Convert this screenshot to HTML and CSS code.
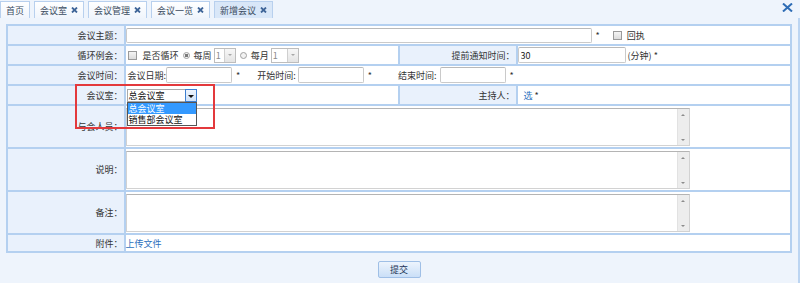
FILE: index.html
```html
<!DOCTYPE html>
<html lang="zh-CN">
<head>
  <meta charset="UTF-8">
  <title>新增会议</title>
  <link rel="stylesheet" href="styles.css">
</head>
<body>

  <div class="tabbar">
    <div class="tabs">
      <span class="tab">首页</span>
      <span class="tab">会议室<svg class="tab-x" width="7" height="6" viewBox="0 0 7 6"><path d="M1 0.5L6 5.5M6 0.5L1 5.5"/></svg></span>
      <span class="tab">会议管理<svg class="tab-x" width="7" height="6" viewBox="0 0 7 6"><path d="M1 0.5L6 5.5M6 0.5L1 5.5"/></svg></span>
      <span class="tab">会议一览<svg class="tab-x" width="7" height="6" viewBox="0 0 7 6"><path d="M1 0.5L6 5.5M6 0.5L1 5.5"/></svg></span>
      <span class="tab active">新增会议<svg class="tab-x" width="7" height="6" viewBox="0 0 7 6"><path d="M1 0.5L6 5.5M6 0.5L1 5.5"/></svg></span>
    </div>
    <svg class="close-all" width="11" height="9" viewBox="0 0 11 9"><path d="M1 0.5L10 8.5M10 0.5L1 8.5"/></svg>
  </div>

  <div class="panel">
    <table class="form">
      <colgroup>
        <col class="c-label"><col class="c-val"><col class="c-label"><col class="c-val">
      </colgroup>
      <tr>
        <th>会议主题：</th>
        <td colspan="3">
          <div class="line">
            <input class="txt w-subject" type="text">
            <span class="req">*</span>
            <span class="check ml-receipt"></span>
            <span class="ml5">回执</span>
          </div>
        </td>
      </tr>
      <tr>
        <th>循环例会：</th>
        <td>
          <div class="line">
            <span class="check ml2"></span>
            <span class="ml6">是否循环</span>
            <span class="radio on ml4"></span>
            <span class="ml4">每周</span>
            <span class="mini-select ml2"><b>1</b><i></i></span>
            <span class="radio ml4"></span>
            <span class="ml4">每月</span>
            <span class="mini-select wide ml2"><b>1</b><i></i></span>
          </div>
        </td>
        <th>提前通知时间：</th>
        <td>
          <div class="line">
            <input class="txt w-notice" type="text" value="30">
            <span class="ml2">(分钟) *</span>
          </div>
        </td>
      </tr>
      <tr>
        <th>会议时间：</th>
        <td colspan="3">
          <div class="line">
            <span class="ml2">会议日期:</span>
            <input class="txt w-time" type="text">
            <span class="req">*</span>
            <span class="gap-a">开始时间:</span>
            <input class="txt w-time ml2" type="text">
            <span class="req">*</span>
            <span class="gap-b">结束时间:</span>
            <input class="txt w-time ml3" type="text">
            <span class="req">*</span>
          </div>
        </td>
      </tr>
      <tr>
        <th>会议室：</th>
        <td>
          <div class="line">
            <div class="room-select">
              <span class="room-value">总会议室</span>
              <span class="room-btn"></span>
              <ul class="room-list">
                <li class="selected">总会议室</li>
                <li>销售部会议室</li>
              </ul>
            </div>
          </div>
        </td>
        <th>主持人：</th>
        <td>
          <div class="line">
            <a class="link ml6">选</a>
            <span class="ml2">*</span>
          </div>
        </td>
      </tr>
      <tr class="tall">
        <th>与会人员：</th>
        <td colspan="3">
          <div class="area"><textarea></textarea><span class="sbar"><i class="up"></i><i class="down"></i></span></div>
        </td>
      </tr>
      <tr class="tall">
        <th>说明：</th>
        <td colspan="3">
          <div class="area"><textarea></textarea><span class="sbar"><i class="up"></i><i class="down"></i></span></div>
        </td>
      </tr>
      <tr class="tall">
        <th>备注：</th>
        <td colspan="3">
          <div class="area"><textarea></textarea><span class="sbar"><i class="up"></i><i class="down"></i></span></div>
        </td>
      </tr>
      <tr class="short">
        <th>附件：</th>
        <td colspan="3"><a class="link">上传文件</a></td>
      </tr>
    </table>

    <div class="actions">
      <button type="button">提交</button>
    </div>

    <div class="mark"></div>
  </div>

</body>
</html>
```

FILE: styles.css
```css
body {
  margin: 0;
  background-color: #eef4fc;
  font-family: "Noto Sans CJK SC", "Noto Sans", sans-serif;
  font-size: 9px;
  color: #333;
}

/* tabs */
.tabbar {
  height: 18px;
  display: flex;
  justify-content: space-between;
  align-items: flex-start;
}

.tabs {
  display: flex;
  gap: 4px;
  padding-top: 1px;
}

.tab {
  height: 16px;
  padding: 0 5px;
  border: 1px solid #b8d0ee;
  border-bottom: none;
  background: linear-gradient(#ffffff, #f0f5fc);
  display: flex;
  align-items: center;
  gap: 4px;
  color: #3a4b60;
}

.tab.active {
  background: #d9e7f8;
}

.tab-x path {
  stroke: #3f6598;
  stroke-width: 1.8;
}

.close-all {
  margin: 3px 7px 0 0;
}

.close-all path {
  stroke: #2f6db5;
  stroke-width: 2;
}

/* form */
.panel {
  position: relative;
  padding: 6px;
  border-right: 2px solid #bcd5f2;
}

.form {
  width: 100%;
  border-collapse: collapse;
  table-layout: fixed;
  background-color: #fff;
}

.c-label { width: 15%; }
.c-val { width: 35%; }

.form th,
.form td {
  border: 2px solid #b4d0f0;
  height: 18px;
  padding: 0;
}

.form th {
  background-color: #e9f1fc;
  font-weight: normal;
  text-align: right;
  color: #333;
  padding-right: 1px;
}

.form tr.tall th,
.form tr.tall td {
  height: 41px;
}

.form tr.short th,
.form tr.short td {
  height: 16px;
}

.line {
  display: flex;
  align-items: center;
  white-space: nowrap;
}

.txt {
  box-sizing: border-box;
  height: 15px;
  border: 1px solid #cacaca;
  border-top-color: #b9b9b9;
  border-radius: 2px;
  padding: 0 2px;
  font: inherit;
  color: #222;
  outline: none;
}

.w-subject { width: 466px; }
.w-notice { width: 108px; height: 16px; }
.w-time { width: 66px; height: 16px; }

.req { margin-left: 4px; }
.ml2 { margin-left: 2px; }
.ml3 { margin-left: 3px; }
.ml4 { margin-left: 4px; }
.ml5 { margin-left: 5px; }
.ml6 { margin-left: 6px; }
.ml-receipt { margin-left: 13px; }
.gap-a { margin-left: 17px; }
.gap-b { margin-left: 26px; }

.check {
  width: 7px;
  height: 7px;
  border: 1px solid #9a9a9a;
  background: linear-gradient(#f4f4f4, #dcdcdc);
}

.radio {
  box-sizing: border-box;
  width: 7px;
  height: 7px;
  border: 1px solid #a0a0a0;
  border-radius: 50%;
  background-color: #f2f2f2;
}

.radio.on {
  background: radial-gradient(circle, #7a7a7a 0 1.5px, #f2f2f2 2px);
}

.mini-select {
  display: flex;
  height: 13px;
  border: 1px solid #bdbdbd;
  background-color: #fff;
}

.mini-select b {
  width: 8px;
  font-weight: normal;
  color: #8a8a8a;
  padding-left: 1px;
  line-height: 13px;
}

.mini-select.wide b { width: 14px; }

.mini-select i {
  width: 10px;
  border-left: 1px solid #cfcfcf;
  background: linear-gradient(#f7f7f7, #e4e4e4);
  position: relative;
}

.mini-select i::after {
  content: "";
  position: absolute;
  left: 3px;
  top: 5px;
  border-left: 2px solid transparent;
  border-right: 2px solid transparent;
  border-top: 2px solid #a8a8a8;
}

/* room select, opened */
.room-select {
  position: relative;
  display: flex;
  width: 70px;
  height: 13px;
  margin-left: 1px;
  border: 1px solid #a9a9a9;
  box-sizing: border-box;
  background-color: #fff;
}

.room-value {
  flex: 1;
  padding-left: 1px;
  line-height: 11px;
  color: #111;
}

.room-btn {
  width: 10px;
  border: 1px solid #3d7fd1;
  margin: -1px -1px -1px 0;
  background: linear-gradient(#eef5fe, #cfe2f8);
  position: relative;
}

.room-btn::after {
  content: "";
  position: absolute;
  left: 2px;
  top: 5px;
  border-left: 3px solid transparent;
  border-right: 3px solid transparent;
  border-top: 3px solid #111;
}

.room-list {
  position: absolute;
  left: -1px;
  top: 12px;
  width: 70px;
  box-sizing: border-box;
  margin: 0;
  padding: 0;
  list-style: none;
  border: 1px solid #555;
  background-color: #fff;
  z-index: 2;
}

.room-list li {
  height: 11px;
  line-height: 11px;
  padding-left: 1px;
  color: #111;
}

.room-list li.selected {
  background-color: #3399ff;
  color: #fff;
}

.link {
  color: #2c6fbd;
  cursor: pointer;
}

/* textareas with old style scrollbar */
.area {
  display: flex;
  width: 564px;
  height: 38px;
  box-sizing: border-box;
  border: 1px solid #d2d2d2;
  border-top-color: #b4b4b4;
  background-color: #fff;
}

.area textarea {
  flex: 1;
  border: none;
  resize: none;
  outline: none;
  overflow: hidden;
}

.sbar {
  width: 11px;
  background-color: #ededed;
  border-left: 1px solid #e2e2e2;
  display: flex;
  flex-direction: column;
  justify-content: space-between;
  align-items: center;
  padding: 5px 0 4px;
}

.sbar .up {
  border-left: 2px solid transparent;
  border-right: 2px solid transparent;
  border-bottom: 2px solid #8c8c8c;
}

.sbar .down {
  border-left: 2px solid transparent;
  border-right: 2px solid transparent;
  border-top: 2px solid #8c8c8c;
}

.actions {
  text-align: center;
  margin-top: 8px;
}

.actions button {
  width: 43px;
  height: 17px;
  padding: 0;
  border: 1px solid #9fbfe6;
  border-radius: 2px;
  background: linear-gradient(#edf4fd, #cadff7);
  font: inherit;
  color: #1e3558;
  cursor: pointer;
}

/* red annotation box */
.mark {
  position: absolute;
  left: 75px;
  top: 66px;
  width: 140px;
  height: 45px;
  box-sizing: border-box;
  border: 2px solid #e3393c;
  pointer-events: none;
}
```
